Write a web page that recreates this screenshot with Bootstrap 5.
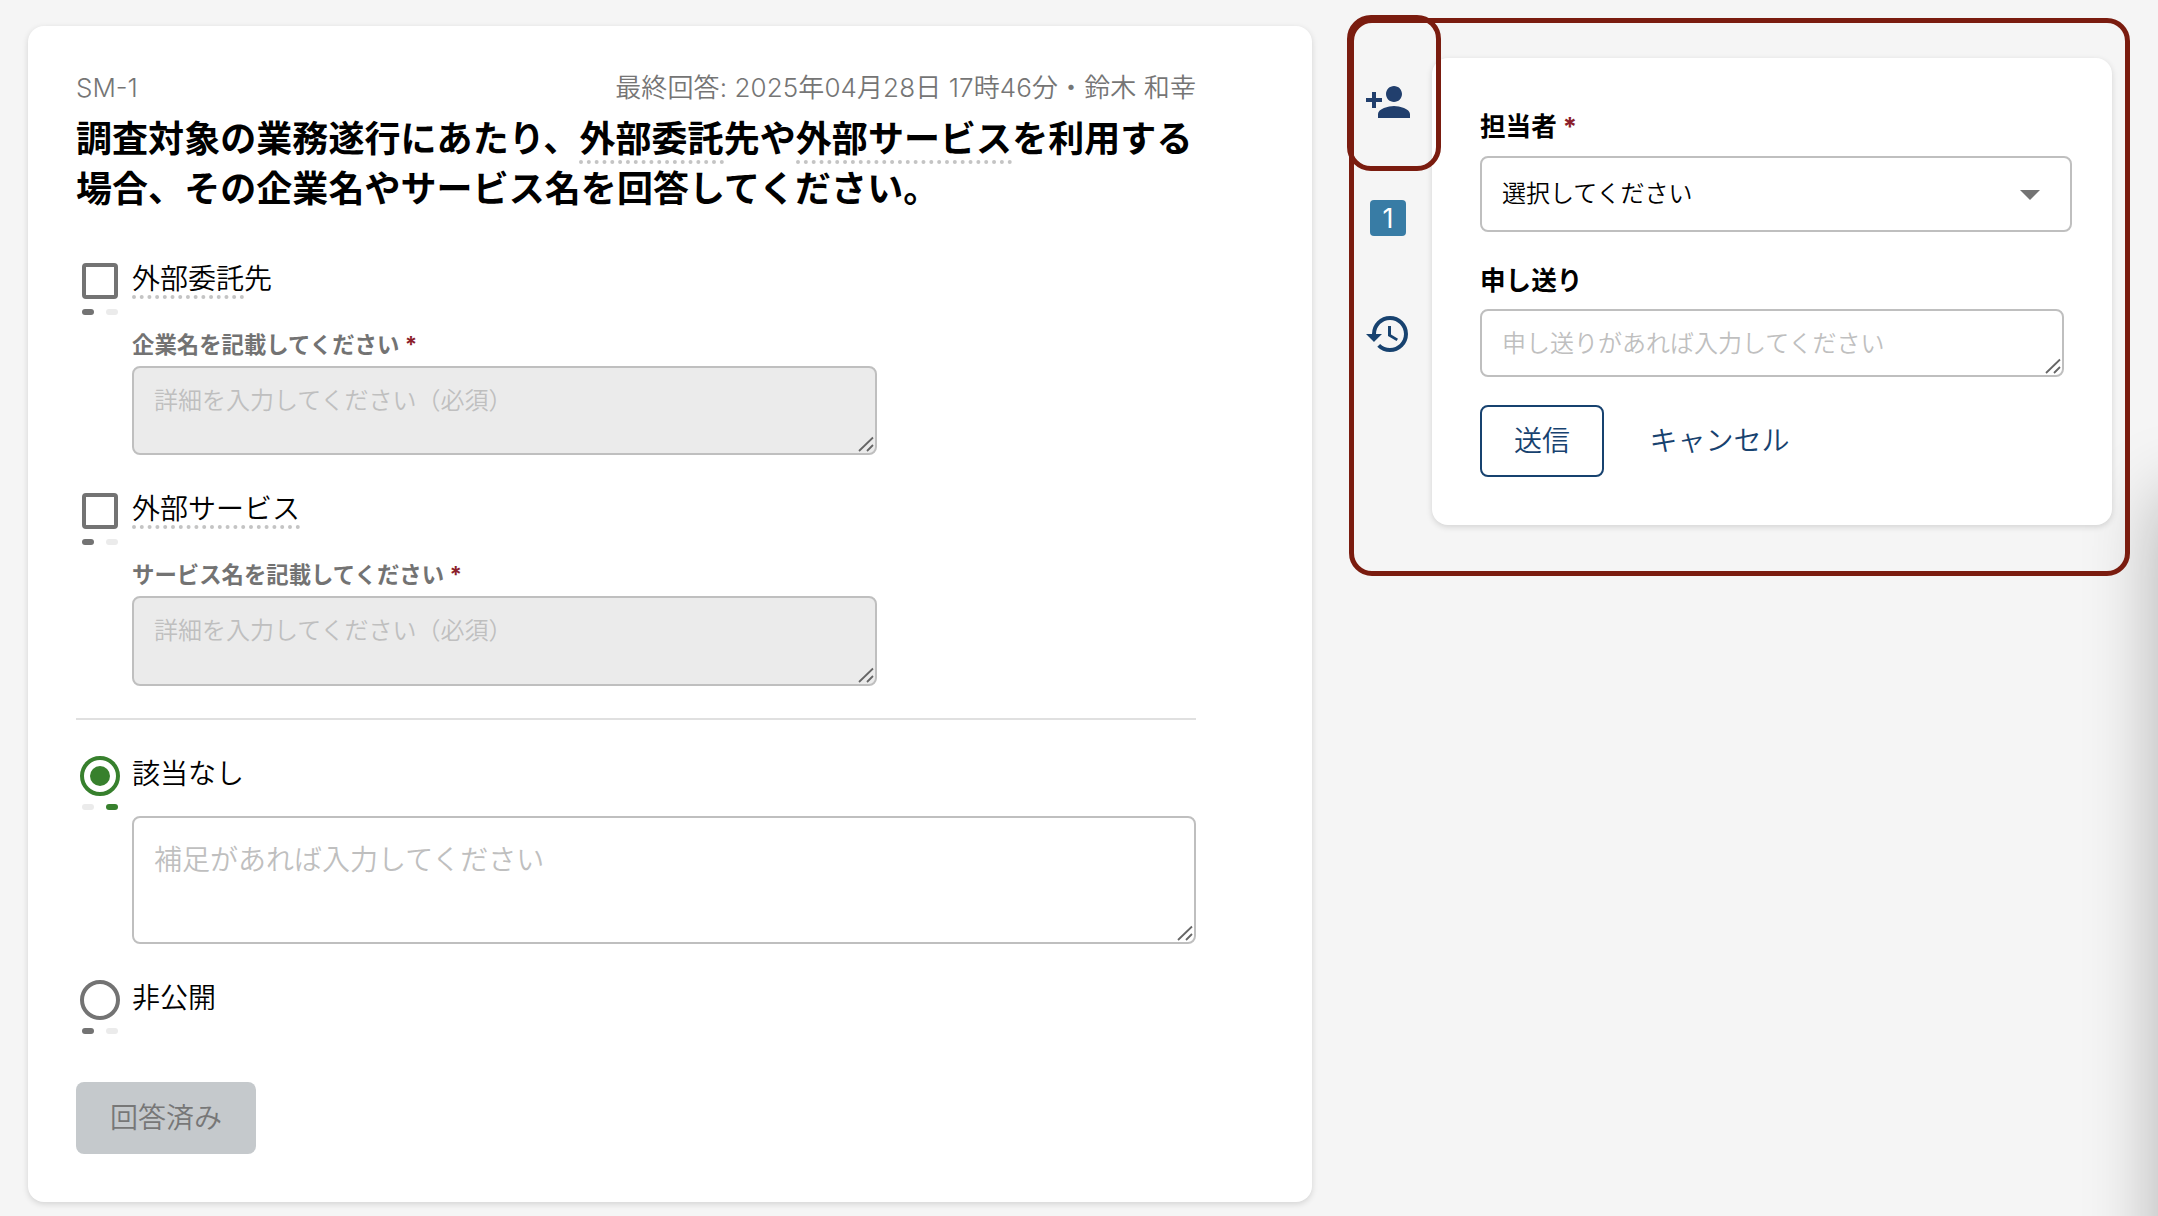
<!DOCTYPE html>
<html lang="ja">
<head>
<meta charset="utf-8">
<title>SM-1</title>
<link href="https://cdn.jsdelivr.net/npm/bootstrap@5.3.0/dist/css/bootstrap.min.css" rel="stylesheet">
<style>
body{width:2158px;height:1216px;overflow:hidden;position:relative;background:#f5f5f5;color:#000;font-family:"Inter","Noto Sans CJK JP",sans-serif;font-weight:350;font-size:28px;line-height:32px}
.sheet{background:#fff;border-radius:16px;box-shadow:0 2px 6px rgba(0,0,0,.14)}
.question{width:1284px;height:1176px;margin:26px 0 0 28px;padding:44px 116px 48px 48px}
.meta{font-size:26px;line-height:36px;height:36px;color:#757575}
.stamp{letter-spacing:.1px}
.cjk{font-family:"Noto Sans CJK JP",sans-serif;line-height:0}
.title{font-size:36px;line-height:50.4px;font-weight:700;margin:8px 0 0;letter-spacing:.06px}
.term{display:inline-block;position:relative}
.term::after{content:"";position:absolute;left:0;right:0;bottom:-4px;border-bottom:4px dotted #c4c4c4}
.title .term::after{bottom:0}
.opt{column-gap:14px}
.ctl{width:36px;margin-left:6px}
.box{height:36px;border:4px solid #737373;border-radius:4px}
.ring{width:40px;height:40px;margin:0 -2px;border:4px solid #737373;border-radius:50%}
.ring.on{border-color:#37802d}
.ring.on::before{content:"";width:20px;height:20px;border-radius:50%;background:#37802d}
.pips{margin-top:10px}
.ring + .pips{margin-top:8px}
.pips i{width:12px;height:6px;border-radius:3px;background:#ebebeb}
.pips i.dk{background:#737373}
.pips i.gr{background:#37802d}
.radio-text{padding-top:2px}
.detail{margin-left:56px}
.sub{font-size:22.4px;line-height:34px;font-weight:700;color:#737373;margin:13px 0 4px}
.req{color:#8c1f2b}
.field{position:relative}
.field textarea,.picker{display:block;width:100%;border:2px solid #bfbfbf;border-radius:8px;background:#fff;color:#000;resize:none;font-size:24px;line-height:34px;padding:16px 20px 14px;overflow:hidden;font-weight:350;font-family:inherit}
.field textarea:disabled{background:#ebebeb}
.field textarea::placeholder{color:#bfbfbf;opacity:1;font-weight:350}
.grip{position:absolute;right:3px;bottom:3px;width:16px;height:16px;stroke:#666;stroke-width:1.8;fill:none}
.w745{width:745px}
.h89{height:89px}.h90{height:90px}
.field textarea.note{height:128px;font-size:28px;line-height:38px;padding:23px 20px}
.rule{height:2px;background:#e0e0e0;margin:32px 0 36px}
.act{height:72px;border-radius:8px;font-size:28px;font-weight:350;line-height:40px;padding:0;border-width:2px}
.done{width:180px;background:#c5c9cc;color:#777;margin-top:48px}
.frame{position:relative;width:781px;height:558px;margin:18px 0 0 36.5px;border:5px solid #7a1c0f;border-radius:23px}
.focus-box{position:absolute;left:-7px;top:-8px;width:94px;height:156px;border:5px solid #7a1c0f;border-radius:24px}
.rail{width:78.5px;padding:55px 0 0 10.5px}
.rail svg{display:block;width:48px;height:48px}
.count{width:36px;height:36px;border-radius:4px;background:#387ca5;color:#fff;font-size:27px;font-weight:400;margin:74px 0 74px 6px;padding-top:1px}
.panel{width:680px;height:467px;margin-top:35px;padding:51px 40px 48px 48px}
.lbl{font-size:25.6px;line-height:36px;font-weight:700}
.picker{height:76px;margin:11px 0 31px;padding:0 30px 0 20px}
.caret{width:0;height:0;border:10px solid transparent;border-top-color:#737373;border-bottom:0;margin-top:2px}
.memo{width:584px;margin-top:10px}
.field .h68{height:68px}
.send{width:124px;border:2px solid #17426f;color:#17426f;background:#fff}
.cancel{color:#17426f;margin-left:45.5px;border:0}
.shade-clip{position:absolute;right:0;top:0;z-index:1;width:120px;height:1216px;overflow:hidden;pointer-events:none}
.edge-shade{margin:495px 0 0 120px;width:120px;height:1200px;box-shadow:0 0 72px rgba(0,0,0,.28)}
.edge-wrap{width:240px}
.frame,.focus-box{z-index:1}
</style>
</head>
<body>
<div class="shade-clip"><div class="edge-wrap d-flex"><div class="edge-shade flex-shrink-0"></div></div></div>
<div class="d-flex align-items-start">
  <main class="sheet question flex-shrink-0">
    <div class="meta d-flex justify-content-between"><span>SM-1</span><span class="stamp">最終回答: 2025年04月28日 17時46分<span class="cjk">・</span>鈴木 和幸</span></div>
    <h1 class="title">調査対象の業務遂行にあたり、<span class="term">外部委託</span>先や<span class="term">外部サービス</span>を利用する<br>場合、その企業名やサービス名を回答してください。</h1>

    <div class="opt d-flex align-items-start" style="margin-top:48px">
      <div class="ctl"><div class="box"></div><div class="pips d-flex justify-content-between"><i class="dk"></i><i></i></div></div>
      <div><span class="term">外部委託</span>先</div>
    </div>
    <div class="detail">
      <div class="sub">企業名を記載してください <span class="req">*</span></div>
      <div class="field w745"><textarea class="h89" disabled placeholder="詳細を入力してください（必須）"></textarea><svg class="grip" viewBox="0 0 16 16"><path d="M1 15L15 1.5M9 15L15 9"/></svg></div>
    </div>

    <div class="opt d-flex align-items-start" style="margin-top:38px">
      <div class="ctl"><div class="box"></div><div class="pips d-flex justify-content-between"><i class="dk"></i><i></i></div></div>
      <div><span class="term">外部サービス</span></div>
    </div>
    <div class="detail">
      <div class="sub">サービス名を記載してください <span class="req">*</span></div>
      <div class="field w745"><textarea class="h90" disabled placeholder="詳細を入力してください（必須）"></textarea><svg class="grip" viewBox="0 0 16 16"><path d="M1 15L15 1.5M9 15L15 9"/></svg></div>
    </div>

    <div class="rule"></div>

    <div class="opt d-flex align-items-start">
      <div class="ctl"><div class="ring on d-flex align-items-center justify-content-center"></div><div class="pips d-flex justify-content-between"><i></i><i class="gr"></i></div></div>
      <div class="radio-text">該当なし</div>
    </div>
    <div class="detail" style="margin-top:6px">
      <div class="field"><textarea class="note" placeholder="補足があれば入力してください"></textarea><svg class="grip" viewBox="0 0 16 16"><path d="M1 15L15 1.5M9 15L15 9"/></svg></div>
    </div>

    <div class="opt d-flex align-items-start" style="margin-top:36px">
      <div class="ctl"><div class="ring"></div><div class="pips d-flex justify-content-between"><i class="dk"></i><i></i></div></div>
      <div class="radio-text">非公開</div>
    </div>
    <button class="btn act done" type="button">回答済み</button>
  </main>

  <aside class="frame d-flex align-items-start flex-shrink-0">
    <nav class="rail flex-shrink-0">
      <svg viewBox="0 0 24 24" fill="#213f6d"><path d="M15 12c2.21 0 4-1.79 4-4s-1.79-4-4-4-4 1.79-4 4 1.79 4 4 4zm-9-2V7H4v3H1v2h3v3h2v-3h3v-2H6zm9 4c-2.67 0-8 1.34-8 4v2h16v-2c0-2.66-5.33-4-8-4z"/></svg>
      <div class="count d-flex align-items-center justify-content-center">1</div>
      <svg viewBox="0 0 24 24" fill="#17426f"><path d="M13 3a9 9 0 0 0-9 9H1l3.89 3.89.07.14L9 12H6c0-3.87 3.13-7 7-7s7 3.13 7 7-3.13 7-7 7c-1.93 0-3.68-.79-4.94-2.06l-1.42 1.42A8.954 8.954 0 0 0 13 21a9 9 0 0 0 0-18zm-1 5v5l4.28 2.54.72-1.21-3.5-2.08V8H12z"/></svg>
    </nav>
    <section class="sheet panel flex-shrink-0">
      <div class="lbl">担当者 <span class="req">*</span></div>
      <div class="picker d-flex align-items-center justify-content-between"><span>選択してください</span><span class="caret"></span></div>
      <div class="lbl">申し送り</div>
      <div class="field memo"><textarea class="h68" placeholder="申し送りがあれば入力してください"></textarea><svg class="grip" viewBox="0 0 16 16"><path d="M1 15L15 1.5M9 15L15 9"/></svg></div>
      <div class="d-flex" style="margin-top:28px"><button class="btn act send" type="button">送信</button><button class="btn act cancel" type="button">キャンセル</button></div>
    </section>
    <div class="focus-box"></div>
  </aside>
</div>
<script src="https://cdn.jsdelivr.net/npm/bootstrap@5.3.0/dist/js/bootstrap.bundle.min.js"></script>
</body>
</html>
